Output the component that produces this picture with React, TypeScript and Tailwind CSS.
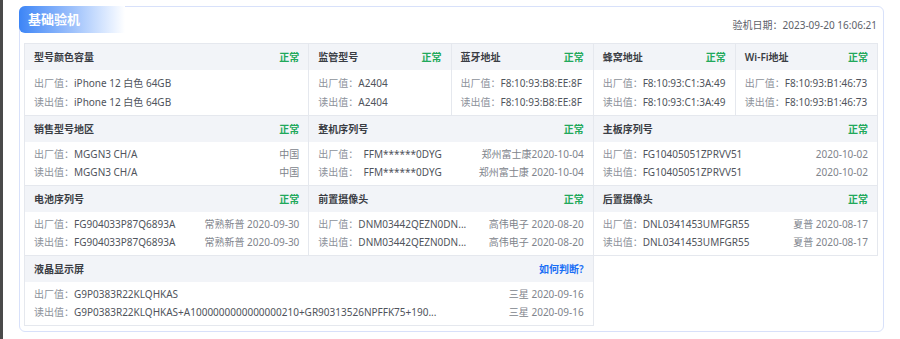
import type { ReactNode } from "react";

type Line = { label: string; value: string; side?: string };
type Item = {
  title: string;
  span: string;
  lines: Line[];
  status?: ReactNode;
  tall?: boolean;
};

const ok = <span className="font-semibold text-[#21a95b]">正常</span>;

const items: Item[] = [
  {
    title: "型号颜色容量",
    span: "col-span-2",
    tall: true,
    status: ok,
    lines: [
      { label: "出厂值：", value: "iPhone 12 白色 64GB" },
      { label: "读出值：", value: "iPhone 12 白色 64GB" },
    ],
  },
  {
    title: "监管型号",
    span: "col-span-1",
    tall: true,
    status: ok,
    lines: [
      { label: "出厂值：", value: "A2404" },
      { label: "读出值：", value: "A2404" },
    ],
  },
  {
    title: "蓝牙地址",
    span: "col-span-1",
    tall: true,
    status: ok,
    lines: [
      { label: "出厂值：", value: "F8:10:93:B8:EE:8F" },
      { label: "读出值：", value: "F8:10:93:B8:EE:8F" },
    ],
  },
  {
    title: "蜂窝地址",
    span: "col-span-1",
    tall: true,
    status: ok,
    lines: [
      { label: "出厂值：", value: "F8:10:93:C1:3A:49" },
      { label: "读出值：", value: "F8:10:93:C1:3A:49" },
    ],
  },
  {
    title: "Wi-Fi地址",
    span: "col-span-1",
    tall: true,
    status: ok,
    lines: [
      { label: "出厂值：", value: "F8:10:93:B1:46:73" },
      { label: "读出值：", value: "F8:10:93:B1:46:73" },
    ],
  },
  {
    title: "销售型号地区",
    span: "col-span-2",
    status: ok,
    lines: [
      { label: "出厂值：", value: "MGGN3 CH/A", side: "中国" },
      { label: "读出值：", value: "MGGN3 CH/A", side: "中国" },
    ],
  },
  {
    title: "整机序列号",
    span: "col-span-2",
    status: ok,
    lines: [
      { label: "出厂值：", value: "\u00a0\u00a0FFM******0DYG", side: "郑州富士康2020-10-04" },
      { label: "读出值：", value: "\u00a0\u00a0FFM******0DYG", side: "郑州富士康 2020-10-04" },
    ],
  },
  {
    title: "主板序列号",
    span: "col-span-2",
    status: ok,
    lines: [
      { label: "出厂值：", value: "FG10405051ZPRVV51", side: "2020-10-02" },
      { label: "读出值：", value: "FG10405051ZPRVV51", side: "2020-10-02" },
    ],
  },
  {
    title: "电池序列号",
    span: "col-span-2",
    status: ok,
    lines: [
      { label: "出厂值：", value: "FG904033P87Q6893A", side: "常熟新普 2020-09-30" },
      { label: "读出值：", value: "FG904033P87Q6893A", side: "常熟新普 2020-09-30" },
    ],
  },
  {
    title: "前置摄像头",
    span: "col-span-2",
    status: ok,
    lines: [
      { label: "出厂值：", value: "DNM03442QEZN0DN...", side: "高伟电子 2020-08-20" },
      { label: "读出值：", value: "DNM03442QEZN0DN...", side: "高伟电子 2020-08-20" },
    ],
  },
  {
    title: "后置摄像头",
    span: "col-span-2",
    status: ok,
    lines: [
      { label: "出厂值：", value: "DNL0341453UMFGR55", side: "夏普 2020-08-17" },
      { label: "读出值：", value: "DNL0341453UMFGR55", side: "夏普 2020-08-17" },
    ],
  },
  {
    title: "液晶显示屏",
    span: "col-span-4",
    status: <span className="font-semibold text-[#1a6ff5]">如何判断?</span>,
    lines: [
      { label: "出厂值：", value: "G9P0383R22KLQHKAS", side: "三星 2020-09-16" },
      {
        label: "读出值：",
        value: "G9P0383R22KLQHKAS+A1000000000000000210+GR90313526NPFFK75+190...",
        side: "三星 2020-09-16",
      },
    ],
  },
];

function Cell({ item }: { item: Item }) {
  return (
    <div className={`${item.span} border-b border-r border-[#e5e8ee]`}>
      <div className="flex h-[26px] items-center justify-between bg-[#f2f4f8] pl-[9px] pr-[9px]">
        <span className="font-semibold text-[#3a3d44]">{item.title}</span>
        {item.status}
      </div>
      <div
        className={
          item.tall
            ? "h-[45px] pl-[9px] pr-[9px] pt-[4px] leading-[19px]"
            : "h-[43px] pl-[9px] pr-[9px] pt-[3px] leading-[18px]"
        }
      >
        {item.lines.map((l, i) => (
          <div key={i} className="flex justify-between whitespace-nowrap">
            <span>
              <span className="text-[#8d929b]">{l.label}</span>
              <span className="text-[#50545c]">{l.value}</span>
            </span>
            {l.side && <span className="text-[#80848c]">{l.side}</span>}
          </div>
        ))}
      </div>
    </div>
  );
}

export default function App() {
  return (
    <div
      className="flex h-[339px] w-[900px] bg-white text-[10px]"
      style={{ fontFamily: '"Noto Sans", "Noto Sans CJK SC", sans-serif' }}
    >
      <div className="w-[3px] shrink-0 bg-[#4a4a4a]" />
      <div className="flex-1 pl-[16px] pr-[16px] pt-[6px]">
        <div className="rounded-[6px] border border-[#d8e1fa] pb-[5px] pl-[4px] pr-[5px]">
          <div className="-ml-[5px] -mt-px flex h-[27px] items-end justify-between">
            <div className="flex h-[27px] w-[106px] items-center rounded-l-[6px] bg-linear-to-r from-[#3c85f6] via-[#9cc0fb] to-white pl-[9px] text-[13px] font-bold text-white">
              基础验机
            </div>
            <div className="pr-[1px] text-[#5d6169]">验机日期：2023-09-20 16:06:21</div>
          </div>
          <div className="mt-[10px] grid grid-cols-6 border-l border-t border-[#e5e8ee]">
            {items.map((it) => (
              <Cell key={it.title} item={it} />
            ))}
          </div>
        </div>
      </div>
    </div>
  );
}
